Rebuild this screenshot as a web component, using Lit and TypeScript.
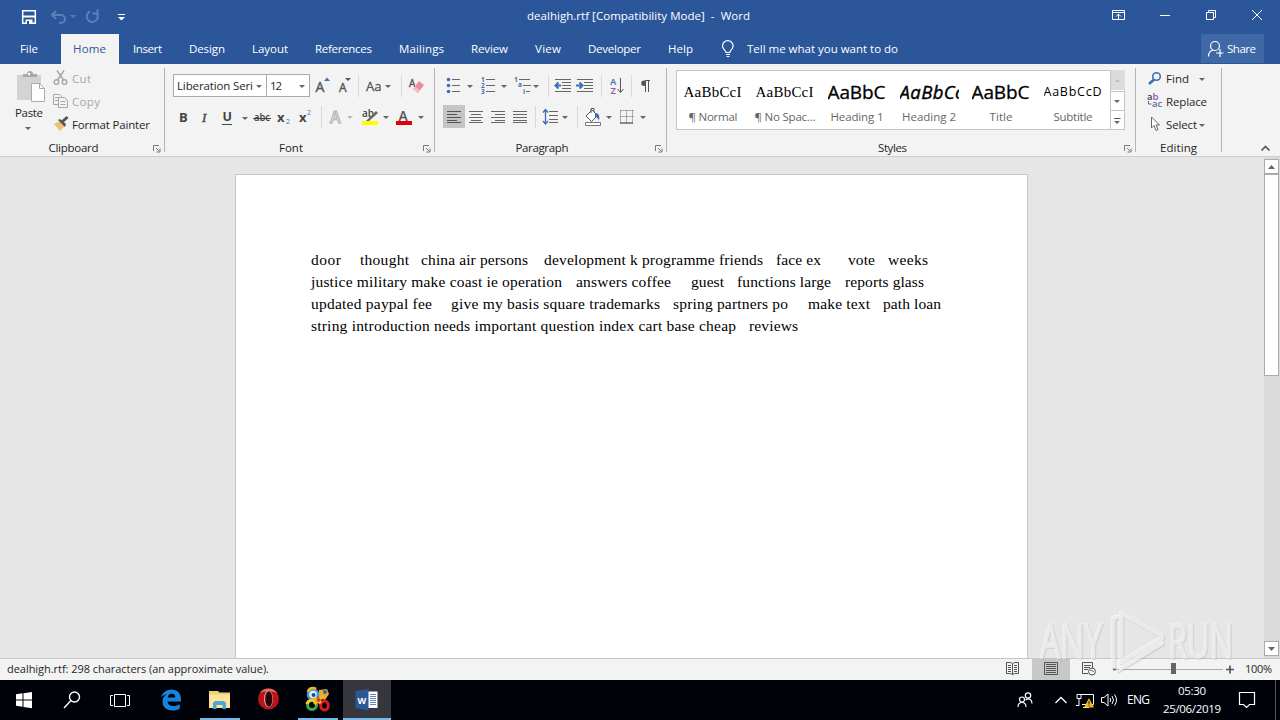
import { LitElement, html, css, svg, type TemplateResult } from "lit";
import { customElement, property } from "lit/decorators.js";

/** Text whose tracking is adjusted so that the run takes exactly `w` pixels. */
@customElement("fit-text")
class FitText extends LitElement {
  @property({ type: Number }) w = 0;
  @property() text = "";
  static styles = css`
    :host { display: inline-block; white-space: pre; font-variant-ligatures: none; flex: none; }
    span { display: inline-block; }
  `;
  render() {
    return html`<span>${this.text}</span>`;
  }
  updated() {
    const s = this.renderRoot.querySelector("span") as HTMLElement;
    s.style.letterSpacing = "0px";
    const natural = s.getBoundingClientRect().width;
    const n = Math.max(1, this.text.length - 1);
    s.style.letterSpacing = (this.w - natural) / n + "px";
    this.style.width = this.w + "px";
  }
}

const fit = (text: string, w: number, cls = "") => html`<fit-text class=${cls} .text=${text} .w=${w}></fit-text>`;
const icon = (w: number, h: number, body: unknown, cls = "") =>
  html`<svg class=${"i " + cls} width=${w} height=${h} viewBox="0 0 ${w} ${h}" fill="none">${body}</svg>`;
const caret = (x: number, y: number, c = "#666") => svg`<path d="M${x} ${y}h6l-3 3z" fill=${c}/>`;
const lines = (x: number, ys: number[], ws: number[], c = "#666", dx: number[] = []) =>
  svg`<path d=${ys.map((y, i) => `M${x + (dx[i] ?? 0)} ${y + 0.5}h${ws[i]}`).join("")} stroke=${c}/>`;
const launcher = icon(9, 9, svg`<path d="M1.500 7V1.500H7M4 4l3 3M8 4.500V8H4.500" stroke="#777"/>`, "launcher");
const sep = (w: number, x: number) => icon(w, 24, svg`<path d="M${x}.5 1v22" stroke="#d8d8d8"/>`);

const TABS: [string, number][] = [
  ["Insert", 29], ["Design", 36], ["Layout", 36], ["References", 57], ["Mailings", 45],
  ["Review", 37], ["View", 26], ["Developer", 53], ["Help", 25],
];

const STYLES: [string, string, number, string, number][] = [
  ["AaBbCcI", "serif", 58, "¶ Normal", 49],
  ["AaBbCcI", "serif", 58, "¶ No Spac...", 61],
  ["AaBbC", "big", 58, "Heading 1", 53],
  ["AaBbCc", "bigi", 64, "Heading 2", 54],
  ["AaBbC", "big", 58, "Title", 23],
  ["AaBbCcD", "sub", 58, "Subtitle", 39],
];

/** Each run: space before it, its text, its width. */
const BODY: [number, string, number][][] = [
  [[0, "door", 30], [19, "thought", 49], [12, "china air persons", 107], [16, "development k programme friends", 219], [13, "face ex", 45], [27, "vote", 27], [13, "weeks", 40]],
  [[0, "justice military make coast ie operation", 251], [14, "answers coffee", 95], [20, "guest", 33], [13, "functions large", 94], [14, "reports glass", 79]],
  [[0, "updated paypal fee", 121], [19, "give my basis square trademarks", 209], [13, "spring partners po", 115], [20, "make text", 62], [13, "path loan", 58]],
  [[0, "string introduction needs important question index cart base cheap", 425], [13, "reviews", 49]],
];

@customElement("app-root")
class AppRoot extends LitElement {
  static styles = css`
    :host { display: block; width: 1280px; height: 720px; overflow: hidden; position: relative;
      font: 11.5px/16px "Open Sans", "Noto Sans", sans-serif; color: #262626; background: #e6e6e6; }
    * { box-sizing: border-box; }
    .i { display: block; flex: none; overflow: visible; }
    .i text { font-family: "Open Sans", "Noto Sans", sans-serif; }
    .head { background: #2b579a; height: 64px; color: #fff; display: flex; flex-direction: column; }
    .title { height: 34px; display: grid; grid-template-columns: 527px 1fr 180px; }
    .title fit-text { padding-top: 8px; }
    .tabs { height: 30px; display: flex; align-items: stretch; }
    .tab { line-height: 30px; margin-right: 27px; }
    .file { margin: 0 23px 0 20px; }
    .home { width: 58px; background: #f3f3f3; color: #2b579a; padding-left: 12px; margin-right: 14px; }
    .tell { margin-left: 11px; flex: none; line-height: 30px; }
    .share { margin-left: auto; margin-right: 16px; width: 63px; height: 29px; background: #3f68a7; display: flex; line-height: 29px; }
    .ribbon { height: 93px; background: #f3f3f3; border-bottom: 1px solid #cfcfcf; display: grid;
      grid-template-columns: 165px 270px 232px 469px 86px 58px; }
    .group { display: flex; flex-direction: column; height: 92px; position: relative;
      background: linear-gradient(#b4b4b4, #b4b4b4) right 4px / 1px 84px no-repeat; }
    .group.none { background: none; }
    .content { height: 76px; flex: none; }
    .caption { height: 16px; display: grid; justify-content: center; margin-right: 18px; }
    .caption.wide { margin-right: 1px; }
    .launcher { position: absolute; right: 4px; bottom: 3px; }
    .clip { display: grid; grid-template-columns: 53px 1fr; padding-top: 3px; }
    .paste { display: flex; flex-direction: column; padding-left: 15px; }
    .paste fit-text { line-height: 16px; }
    .row { display: flex; height: 23px; line-height: 23px; }
    .dim { color: #a8a8a8; }
    .font { padding: 10px 0 0 8px; }
    .tools { display: flex; height: 24px; }
    .tools + .tools { margin-top: 7px; }
    .combo { height: 23px; border: 1px solid #ababab; background: #fff; display: flex; line-height: 22px; padding-left: 3px; justify-content: space-between; }
    .combo.a { width: 94px; }
    .combo.b { width: 43px; border-left: 0; }
    .para { padding: 10px 0 0 8px; }
    .styles { padding: 6px 10px 0 9px; }
    .gallery { width: 449px; height: 60px; border: 1px solid #c6c6c6; background: #fff; display: grid; grid-template-columns: repeat(6, 72px) 15px; }
    .style { display: flex; flex-direction: column; align-items: center; color: #666; overflow: hidden; }
    .sample { height: 38px; width: 59px; overflow: hidden; color: #000; line-height: 43px; display: flex; }
    .serif { font: 15px/42px "Liberation Serif", serif; }
    .big { font: 19px/43px "Open Sans", sans-serif; -webkit-text-stroke: .3px #000; }
    .bigi { font: italic 18.500px/42px "Open Sans", sans-serif; -webkit-text-stroke: .4px #000; }
    .sub { font: 12.500px/42px "Open Sans", sans-serif; }
    .edit { padding: 3px 0 0 10px; }
    .work { height: 501px; display: flex; }
    .page { width: 793px; margin: 17px 0 0 235px; border: 1px solid #c6c6c6; border-bottom: 0; background: #fff; padding: 74px 0 0 75px;
      font: 15.500px/22px "Liberation Serif", serif; color: #000; }
    .line { display: flex; height: 22px; }
    .scroll { margin-left: auto; width: 16px; background: #dadada; display: flex; flex-direction: column; padding: 2px 0 2px; }
    .sb { width: 15px; height: 15px; background: #fff; border: 1px solid #ababab; }
    .thumb { width: 15px; height: 202px; background: #fff; border: 1px solid #ababab; margin-bottom: auto; }
    .status { height: 22px; border-top: 1px solid #c6c6c6; background: #f3f3f3; display: flex; line-height: 19px; font-size: 11px; }
    .left { width: 994px; padding-left: 7px; flex: none; }
    .view { background: #c8c8c8; }
    .zoom { margin-left: 11px; }
    .taskbar { height: 40px; background: #00020a; display: flex; color: #fff; }
    .app { width: 48px; height: 40px; }
    .gap { margin-left: 1px; }
    .first { margin-left: 3px; }
    .active { background: #35373d; }
    .tray { margin-left: auto; display: flex; }
    .lang { line-height: 39px; width: 36px; font-size: 12px; }
    .clock { width: 58px; display: flex; flex-direction: column; align-items: center; padding-top: 2px; line-height: 18px; }
    .mark { position: absolute; left: 1034px; top: 604px; }
    .mark text { font-family: "Open Sans", sans-serif; }
  `;

  private head() {
    return html`
      <div class="head">
        <div class="title">
          ${icon(527, 34, svg`
            <path d="M22.700 10.700h12.600v12.600H22.700z" stroke="#fff" stroke-width="1.500"/><path d="M23 16.500h12" stroke="#fff" stroke-width="2"/><path d="M25.500 19.500h7V23h-7z" fill="#fff"/><path d="M27 21h2v3h-2z" fill="#2b579a"/>
            <g stroke="#5b80b8" stroke-width="2"><path d="M56 11l-4 4 4 4M52.500 15H61a3.500 3.500 0 010 8h-2"/><path d="M90 11.500a5.500 5.500 0 106.500 1.500M97.500 9.500v4h-5"/></g>
            ${caret(70, 15, "#5b80b8")}
            <path d="M118 14.500h7" stroke="#fff"/><path d="M118 17h7l-3.500 3.500z" fill="#fff"/>`)}
          ${fit("dealhigh.rtf [Compatibility Mode]  -  Word", 223)}
          ${icon(180, 34, svg`<g stroke="#fff"><path d="M12.500 10.500h12v9h-12zM12.500 12.500h12M18.500 19v-5M16 16.500l2.500-2.500 2.500 2.500M60 15.500h10M106.500 12.500h7v7h-7zM108.500 12.500v-2h7v7h-2M152 10l10 10M162 10l-10 10"/></g>`)}
        </div>
        <div class="tabs">
          ${fit("File", 18, "tab file")}
          <div class="home">${fit("Home", 33, "tab")}</div>
          ${TABS.map(([t, w]) => fit(t, w, "tab"))}
          ${icon(16, 30, svg`<path d="M6 18.500c0-2-3.500-3-3.500-6.500a5.300 5.300 0 0110.600 0c0 3.500-3.300 4.500-3.300 6.500zM6 20.500h4M6.500 22.500h3" stroke="#fff" stroke-width="1.200"/>`)}
          ${fit("Tell me what you want to do", 151, "tell")}
          <div class="share">
            ${icon(26, 29, svg`<g stroke="#fff" stroke-width="1.200"><circle cx="14" cy="12" r="4.500"/><path d="M7.500 22.500c0-4 2-6 5-6.500M19 15v8M15 19h7.500"/></g>`)}
            ${fit("Share", 29)}
          </div>
        </div>
      </div>`;
  }

  private clipboard() {
    return html`<div class="group">
      <div class="content clip">
        <div class="paste">
          ${icon(30, 38, svg`<path d="M2 8h24v25H2z" fill="#d5d2d5"/><path d="M8 10V7h4a3 3 0 016 0h4v3z" fill="#a9a9a9"/><circle cx="14" cy="7" r="1.200" fill="#fff"/><path d="M16.500 16.500h8l5 5v13h-13z" fill="#fff" stroke="#aaa"/><path d="M24.500 16.500v5h5" stroke="#aaa"/>`)}
          ${fit("Paste", 28)}
          ${icon(30, 12, caret(10, 6))}
        </div>
        <div>
          <div class="row dim">${icon(19, 23, svg`<g stroke="#a8a8a8" stroke-width="1.500"><circle cx="3.500" cy="15" r="2.300"/><circle cx="11.500" cy="15" r="2.300"/><path d="M4.500 13L11 3.500M10.500 13L4 3.500"/></g>`)}${fit("Cut", 19)}</div>
          <div class="row dim">${icon(19, 23, svg`<g stroke="#a8a8a8" fill="#f3f3f3"><path d="M.5 4.500h6l2 2v8h-8z"/><path d="M5.500 7.500h6l3 3v7h-9z"/><path d="M2 7.500h4M2 10.500h3M7.500 11.500h5M7.500 14.500h5"/></g>`)}${fit("Copy", 28)}</div>
          <div class="row">${icon(19, 23, svg`<path d="M1 11l6-3 5 5-5 5z" fill="#ecc078"/><path d="M5 7l2-1 6 5-1 3z" fill="#555"/><path d="M9 9l5.500-5" stroke="#555" stroke-width="3"/>`)}${fit("Format Painter", 78)}</div>
        </div>
      </div>
      <div class="caption">${fit("Clipboard", 50)}</div>${launcher}
    </div>`;
  }

  private font() {
    return html`<div class="group">
      <div class="content font">
        <div class="tools">
          <div class="combo a">${fit("Liberation Seri", 76)}${icon(12, 21, caret(2, 10))}</div>
          <div class="combo b">${fit("12", 12)}${icon(12, 21, caret(2, 10))}</div>
          ${icon(27, 24, svg`<text x="5.500" y="18" font-size="14" fill="#555" stroke="#555" stroke-width=".4">A</text><path d="M14 7l3-3.500L20 7z" fill="#456fb5"/>`)}
          ${icon(20, 24, svg`<text x="2" y="18" font-size="12" fill="#555" stroke="#555" stroke-width=".4">A</text><path d="M8 4h6l-3 3z" fill="#555"/>`)}
          ${sep(8, 1)}
          ${icon(35, 24, svg`<text x="1" y="16.500" font-size="13" fill="#555" stroke="#555" stroke-width=".3">Aa</text>${caret(20, 11)}`)}
          ${sep(7, 1)}
          ${icon(20, 24, svg`<text x="2" y="13" font-size="10" fill="#555" stroke="#555" stroke-width=".4">A</text><path d="M6 15l6-8 5 4-6 8z" fill="#e78f9c"/><path d="M6 15l5 4 2-2.500-5-4z" fill="#f5bdc5"/>`)}
        </div>
        <div class="tools">
          ${icon(72, 24, svg`<g fill="#444" font-size="13"><text x="6" y="17" font-weight="700">B</text><text x="29" y="17" font-style="italic" style="font-family:'Liberation Serif'" stroke="#444" stroke-width=".4">I</text><text x="49.500" y="16" font-weight="700" font-size="12.500">U</text></g><path d="M49 19.500h10" stroke="#444"/>`)}
          ${icon(75, 24, svg`${caret(-3, 12)}<g fill="#444" font-weight="700"><text x="9" y="16" font-size="11" font-weight="600" textLength="16" lengthAdjust="spacingAndGlyphs">abc</text><text x="32" y="17" font-size="13">x</text><text x="54" y="17" font-size="13">x</text></g><g fill="#4a74b4" font-size="7"><text x="41" y="19">2</text><text x="62" y="10">2</text></g><path d="M8 13.500h18" stroke="#444"/>`)}
          ${sep(8, 1)}
          ${icon(31, 24, svg`<text x="2" y="18" font-size="16" font-weight="600" fill="#f3f3f3" stroke="#b0b0b0">A</text>${caret(19, 11, "#b9b9c4")}`)}
          ${icon(35, 24, svg`<text x="3" y="12" font-size="10" font-weight="600" fill="#444">ab</text><path d="M7 16l10-10 2 2-9 8z" fill="#666"/><path d="M3 16h16v4H3z" fill="#ff0"/>${caret(24, 11)}`)}
          ${icon(35, 24, svg`<text x="4.500" y="15.500" font-size="14" font-weight="600" fill="#555">A</text><path d="M2 16h16v4H2z" fill="#e30000"/>${caret(24, 11)}`)}
        </div>
      </div>
      <div class="caption">${fit("Font", 24)}</div>${launcher}
    </div>`;
  }

  private paragraph() {
    const n = (x: number, y: number, t: string) => svg`<text x=${x} y=${y} font-size="6.500" font-weight="700" fill="#3c6eb4">${t}</text>`;
    return html`<div class="group">
      <div class="content para">
        <div class="tools">
          ${icon(34, 24, svg`<g fill="#3c6eb4"><circle cx="5.500" cy="5.500" r="1.800"/><circle cx="5.500" cy="11.500" r="1.800"/><circle cx="5.500" cy="17.500" r="1.800"/></g>${lines(9, [5, 11, 17], [8, 8, 8])}${caret(24, 11)}`)}
          ${icon(34, 24, svg`${n(4, 8, "1")}${n(4, 14, "2")}${n(4, 20, "3")}${lines(9, [5, 11, 17], [9, 9, 9])}${caret(24, 11)}`)}
          ${icon(38, 24, svg`${n(3, 8, "1")}${n(7, 13, "a")}${n(12, 20, "i")}${lines(8, [5, 11, 17], [11, 8, 4], "#666", [0, 4, 7])}${caret(22, 11)}`)}
          ${icon(22, 24, svg`<path d="M.5 1v22" stroke="#d8d8d8" transform="translate(-1 0)"/>${lines(7, [5, 8, 11, 14, 17], [16, 9, 9, 9, 16], "#666", [-1, 6, 6, 6, -1])}<path d="M6 11.500h6M9.500 8.500l-3 3 3 3" stroke="#3c6eb4" stroke-width="2"/>`)}
          ${icon(31, 24, svg`${lines(7, [5, 8, 11, 14, 17], [16, 9, 9, 9, 16], "#666", [-1, 6, 6, 6, -1])}<path d="M5 11.500h6M8.500 8.500l3 3-3 3" stroke="#3c6eb4" stroke-width="2"/>`)}
          ${icon(32, 24, svg`<path d="M-.5 1v22M29.500 1v22" stroke="#d8d8d8"/><text x="8" y="10.500" font-size="9.500" font-weight="600" fill="#3c6eb4">A</text><text x="8.500" y="19.500" font-size="9.500" font-weight="600" fill="#8e54b0">Z</text><path d="M18.500 4v14M15.500 15l3 3.500 3-3.500" stroke="#555"/>`)}
          ${icon(20, 24, svg`<path d="M12 6.500h-2a2.700 2.700 0 000 5.500h2z" fill="#555"/><path d="M11.500 18V6.500H16M14.500 6.500V18" stroke="#555"/>`)}
        </div>
        <div class="tools">
          ${icon(22, 24, svg`<path d="M0 0h22v23H0z" fill="#c5c5c5"/>${lines(4, [6, 9, 12, 15], [14, 10, 14, 10], "#555")}${lines(4, [17], [14], "#555")}`)}
          ${icon(22, 24, lines(4, [6, 9, 12, 15, 17], [14, 10, 14, 10, 14], "#666", [0, 2, 0, 2, 0]))}
          ${icon(22, 24, lines(4, [6, 9, 12, 15, 17], [14, 10, 14, 10, 14], "#666", [0, 4, 0, 4, 0]))}
          ${icon(31, 24, svg`${lines(4, [6, 9, 12, 15, 17], [14, 14, 14, 14, 14])}<path d="M26.500 1v22" stroke="#d8d8d8"/>`)}
          ${icon(42, 24, svg`${lines(9, [6, 10, 14, 17], [9, 9, 9, 9])}<path d="M5.500 5v14M3 7.500l2.500-3 2.500 3M3 16l2.500 3L8 16" stroke="#3c6eb4" stroke-width="1.300"/>${caret(22, 11)}<path d="M37.500 1v22" stroke="#d8d8d8"/>`)}
          ${icon(34, 24, svg`<path d="M4 11l6-6 5.500 5.500-6 6z" fill="#fff" stroke="#555"/><path d="M9 8V3.500h3V7" stroke="#555"/><path d="M13 8c4 0 5 3 4 8-1-3-2-4-4-4z" fill="#3c6eb4"/><path d="M3.500 17.500h15v3h-15z" fill="#fff" stroke="#777"/>${caret(24, 11)}`)}
          ${icon(38, 24, svg`<path d="M4.500 5.500h13M4.500 11.500h13M4.500 5.500v13M10.500 5.500v13M16.500 5.500v13" stroke="#666" stroke-dasharray="1 1"/><path d="M4 18h13" stroke="#666" stroke-width="1.500"/>${caret(24, 11)}`)}
        </div>
      </div>
      <div class="caption">${fit("Paragraph", 53)}</div>${launcher}
    </div>`;
  }

  private styleGroup() {
    return html`<div class="group">
      <div class="content styles">
        <div class="gallery">
          ${STYLES.map(([s, c, w, name, nw]) => html`<div class="style"><div class="sample">${fit(s, w, c)}</div>${fit(name, nw)}</div>`)}
          ${icon(15, 57, svg`<path d="M1-1h15v20H1z" fill="#dcdcdc"/><path d="M1.500-1v60M1 20.500h14M1 39.500h14" stroke="#c6c6c6"/><path d="M6 11l2.500-3 2.500 3z" fill="#bbb"/>${caret(5, 29)}${caret(5, 50)}<path d="M5 47.500h6.500" stroke="#555"/>`)}
        </div>
      </div>
      <div class="caption">${fit("Styles", 29)}</div>${launcher}
    </div>`;
  }

  private editing() {
    return html`<div class="group">
      <div class="content edit">
        <div class="row">${icon(20, 23, svg`<circle cx="10.500" cy="9.500" r="3.800" stroke="#3c6eb4" stroke-width="1.600"/><path d="M8 12.500l-5 4.500" stroke="#3c6eb4" stroke-width="2.500"/>`)}${fit("Find", 23)}${icon(16, 23, caret(10, 11))}</div>
        <div class="row">${icon(20, 23, svg`<g font-size="9.500" font-weight="600"><text x="1" y="10" fill="#444">a<tspan fill="#8e54b0">b</tspan></text><text x="6" y="17" fill="#5d6f9c">ac</text></g><path d="M2.500 11v3h3" stroke="#3c6eb4"/>`)}${fit("Replace", 41)}</div>
        <div class="row">${icon(20, 23, svg`<path d="M5.500 4v11l2.500-2.500 2 5 2-1-2-4.500h3.500z" fill="#fff" stroke="#666"/>`)}${fit("Select", 31)}${icon(12, 23, caret(2, 11))}</div>
      </div>
      <div class="caption wide">${fit("Editing", 37)}</div>
    </div>`;
  }

  private status() {
    return html`<div class="status">
      <div class="left">${fit("dealhigh.rtf: 298 characters (an approximate value).", 262)}</div>
      ${icon(38, 21, svg`<path d="M12.500 3.500h4l2 1 2-1h4v11h-4l-2 1-2-1h-4zM18.500 5v11" stroke="#555"/>${lines(14, [6, 8, 10, 12], [3, 3, 3, 3], "#555")}${lines(20, [6, 8, 10, 12], [3, 3, 3, 3], "#555")}`)}
      <div class="view">${icon(38, 21, svg`<path d="M12.500 3.500h13v12h-13z" stroke="#555"/>${lines(14, [5, 7, 9, 11, 13], [10, 10, 10, 10, 10], "#555")}`)}</div>
      ${icon(32, 21, svg`<path d="M22.500 9V3.500H12.500v11H18" stroke="#555"/>${lines(14, [6, 8, 10], [7, 6, 4], "#555")}<circle cx="22" cy="12.500" r="3.500" fill="#f3f3f3" stroke="#555"/><path d="M20 12c2-3 2 2 4 0" stroke="#555"/>`)}
      ${icon(132, 21, svg`<path d="M20 10.500h101" stroke="#aaa"/><path d="M11 10.500h6M124 10.500h8M128 6.500v8" stroke="#555" stroke-width="1.700"/><path d="M69 4h5v11h-5z" fill="#666"/>`)}
      ${fit("100%", 27, "zoom")}
    </div>`;
  }

  private task(body: TemplateResult, cls = "", running = false) {
    const bar = running ? (cls.includes("active") ? svg`<path d="M0 38h48v2H0z" fill="#76b9ed"/>` : svg`<path d="M4 38h40v2H4z" fill="#76b9ed"/>`) : svg``;
    return html`<div class=${"app " + cls}>${icon(48, 40, svg`${body}${bar}`)}</div>`;
  }

  private taskbar() {
    return html`<div class="taskbar">
      ${this.task(svg`<path d="M16 14.300l6.500-1v6.200H16zM23.500 13.200l8.500-1.300v7.600h-8.500zM16 20.500h6.500v6.200l-6.500-1zM23.500 20.500H32v7.700l-8.500-1.300z" fill="#fff"/>` as any)}
      ${this.task(svg`<circle cx="26.500" cy="17" r="5" stroke="#fff" stroke-width="1.400"/><path d="M23 20.500l-7 7.500" stroke="#fff" stroke-width="1.400"/>` as any)}
      ${this.task(svg`<path d="M18.500 14.500h11v12h-11zM17 15.500h-2.500v10H17M31 15.500h2.500v10H31" stroke="#fff"/>` as any)}
      ${this.task(svg`<path d="M14 18c1-5 5-8.500 10.500-8.500 6 0 9.500 4 9.500 9.500v2.500H20.500c.3 3 2.500 4.500 6 4.500 2.300 0 4.300-.6 6.300-1.800v4.500c-2 1.100-4.500 1.800-7.500 1.800-6 0-9.800-3.500-9.800-9 0-3.500 1.700-6 4.500-7.500-2.500.5-5 2-6.500 4zm6.700-.5h7.600c0-2.300-1.300-3.800-3.700-3.800-2.200 0-3.500 1.500-3.900 3.800z" fill="#1683dd"/>` as any, "first")}
      ${this.task(svg`<path d="M13 11h9l1.500 1.500H34V28H13z" fill="#f3d073"/><path d="M13 14.500h21V28H13z" fill="#fde49a"/><path d="M17 29v-6l2-2h9l2 2v6h-3.500v-4h-6v4z" fill="#46a9d6"/>` as any, "gap", true)}
      ${this.task(svg`<ellipse cx="23.500" cy="19" rx="10.500" ry="10.500" fill="#b8141c"/><path d="M14.500 13.500a10.500 10.500 0 0118 0c-4-3-14-3-18 0z" fill="#ec6464"/><ellipse cx="23.500" cy="19" rx="4.500" ry="8.500" fill="#e59a9a"/><ellipse cx="23.800" cy="19" rx="3.600" ry="7.800" fill="#2a0306"/>` as any, "gap")}
      ${this.task(svg`<circle cx="19" cy="14.500" r="5" fill="#e9f2fa" stroke="#3e9ae0" stroke-width="2.500"/><circle cx="19.500" cy="15" r="2" fill="#1a4e90"/><path d="M14 12a5 5 0 018-3" stroke="#f0b42c" stroke-width="2.500"/><path d="M25 10l8-1 2 5-4 6-6-2z" fill="#f0a92a"/><circle cx="31" cy="12" r="2" fill="#2266c8"/><circle cx="18" cy="25" r="4.500" stroke="#3caf41" stroke-width="3"/><path d="M13 24c1-5 8-5 10-1" stroke="#f5cd2b" stroke-width="3"/><ellipse cx="30.500" cy="25.500" rx="3.800" ry="4.500" stroke="#d51c22" stroke-width="3"/><path d="M20 18l7 5M29 16l-9 8" stroke="#f5b629" stroke-width="3.500"/><circle cx="24.500" cy="20" r="2" fill="#d7401d"/>` as any, "gap", true)}
      ${this.task(svg`<path d="M24 11.500h10.500v16.500H24z" fill="#fff"/><path d="M27 14.500h6M27 16.500h6M27 18.500h6M27 20.500h6M27 22.500h6M27 24.500h6" stroke="#5b88c4"/><path d="M12.500 11l13-2v21.500l-13-2.500z" fill="#2b5797"/><text x="14.500" y="23.500" font-size="9" font-weight="700" fill="#fff">W</text>` as any, "gap active", true)}
      <div class="tray">
        ${icon(32, 40, svg`<g stroke="#fff" stroke-width="1.200"><circle cx="11" cy="19.500" r="2.500"/><path d="M7 27c0-6 8-6 8 0"/><circle cx="17" cy="15.500" r="2.700"/><path d="M14.500 20c4-2.500 6.500 0 6.500 3.500"/></g>`)}
        ${icon(30, 40, svg`<path d="M12.500 23l5.500-5.500 5.500 5.500" stroke="#fff" stroke-width="1.300"/>`)}
        ${icon(24, 40, svg`<path d="M6 14.500h14.500v10H9M4 14.500h4v4H4zM6 18.500v7H3M10 27.500h6" stroke="#fff"/><path d="M16 18l5 9.500h-10z" fill="#f5b51e"/><path d="M16 21v3.500M16 25.500v1" stroke="#222"/>`)}
        ${icon(30, 40, svg`<g stroke="#fff"><path d="M4.500 17.500H7l4-3.500v12l-4-3.500H4.500zM13 18q1.500 2 0 4M15 16q3 4 0 8M17.500 14.500q4 5.500 0 11"/></g>`)}
        <div class="lang">${fit("ENG", 23)}</div>
        <div class="clock">${fit("05:30", 28)}${fit("25/06/2019", 58)}</div>
        ${icon(59, 40, svg`<path d="M18.500 12.500h15v12h-5l-3 3-3-3h-4z" stroke="#fff" stroke-width="1.200"/><path d="M54.500 0v40" stroke="#555"/>`)}
      </div>
    </div>`;
  }

  private watermark() {
    const art = svg`<g font-size="48" stroke-width="1.500"><text x="6" y="54" textLength="62" lengthAdjust="spacingAndGlyphs">ANY</text><text x="134" y="54" textLength="65" lengthAdjust="spacingAndGlyphs">RUN</text></g>
      <path d="M79 62V16q0-3 4-3M87 47V9l41 23M87 42v16l41-24M84 66l44-27" fill="none" stroke-width="4.500" stroke-linejoin="round" stroke-linecap="round"/>`;
    return html`<div class="mark">${icon(204, 72, svg`<g opacity=".3" fill="#999" stroke="#999" transform="translate(1 1)">${art}</g><g opacity=".65" fill="#fafafa" stroke="#fafafa">${art}</g>`)}</div>`;
  }

  render() {
    return html`
      ${this.head()}
      <div class="ribbon">
        ${this.clipboard()}${this.font()}${this.paragraph()}${this.styleGroup()}${this.editing()}
        <div class="group none">${icon(58, 92, svg`<path d="M39.500 86.500l4-4 4 4" stroke="#555" stroke-width="1.700"/>`)}</div>
      </div>
      <div class="work">
        <div class="page">${BODY.map((l) => html`<div class="line">${l.map(([g, t, w]) => html`<span style="margin-left:${g}px">${fit(t, w)}</span>`)}</div>`)}</div>
        <div class="scroll">
          <div class="sb">${icon(13, 13, svg`<path d="M3 9l3.500-4L10 9z" fill="#666"/>`)}</div>
          <div class="thumb"></div>
          <div class="sb">${icon(13, 13, svg`<path d="M3 5h7L6.500 9z" fill="#666"/>`)}</div>
        </div>
      </div>
      ${this.status()}
      ${this.taskbar()}
      ${this.watermark()}`;
  }
}
